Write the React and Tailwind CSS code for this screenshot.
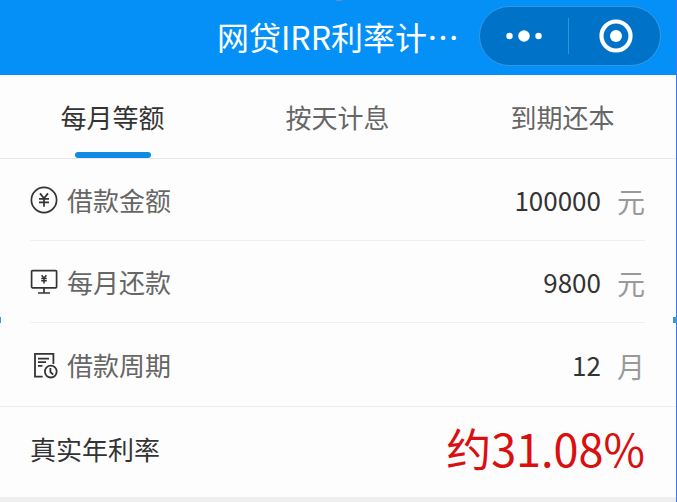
import { useState } from 'react';

const TABS = ['每月等额', '按天计息', '到期还本'];

const FIELDS = [
  { id: 'amount', label: '借款金额', value: '100000', unit: '元', Icon: YenIcon },
  { id: 'monthly', label: '每月还款', value: '9800', unit: '元', Icon: ScreenIcon },
  { id: 'period', label: '借款周期', value: '12', unit: '月', Icon: PeriodIcon },
];

function YenIcon() {
  return (
    <svg className="h-7 w-7 shrink-0" viewBox="0 0 28 28" fill="none" stroke="#333" strokeWidth="1.7" aria-hidden="true">
      <circle cx="14" cy="14" r="12.6" />
      <path d="M10 7.4l4 5 4-5M9 12.8h10M9 16.4h10M14 12.4v8.4" />
    </svg>
  );
}

function ScreenIcon() {
  return (
    <svg className="h-7 w-7 shrink-0" viewBox="0 0 28 28" fill="none" stroke="#333" strokeWidth="1.7" aria-hidden="true">
      <rect x="1.6" y="2.6" width="25" height="17.2" rx="1" />
      <path d="M14 20v4.8M8 25h12" />
      <path d="M11.6 7.2l2.4 2.8 2.4-2.8M11.2 10.4h5.6M11.2 12.8h5.6M14 10v5.4" strokeWidth="1.5" />
    </svg>
  );
}

function PeriodIcon() {
  return (
    <svg className="h-7 w-7 shrink-0" viewBox="0 0 28 28" fill="none" stroke="#333" strokeWidth="1.8" aria-hidden="true">
      <path d="M12.6 25.6H5V2.8h18.4V13" />
      <path d="M8 7.6h11M8 11.2h8M8 14.8h4.4" />
      <circle cx="20.8" cy="20.6" r="5.9" />
      <path d="M20.4 17v4l2.8 2.6" />
    </svg>
  );
}

function Capsule() {
  return (
    <div className="flex h-15 w-[182px] shrink-0 items-center rounded-full border border-[#2f9be6] bg-[#0073c8]">
      <button type="button" aria-label="更多" className="flex h-full flex-1 items-center justify-center">
        <svg className="h-3 w-9" viewBox="0 0 36 12" fill="#fff">
          <circle cx="3.5" cy="6" r="3.2" />
          <circle cx="18" cy="6" r="5.8" />
          <circle cx="32.5" cy="6" r="3.2" />
        </svg>
      </button>
      <span className="h-9 w-px bg-[#2c95dd]" />
      <button type="button" aria-label="关闭" className="flex h-full flex-1 items-center justify-center pl-1">
        <svg className="h-9 w-9" viewBox="0 0 36 36" fill="none">
          <circle cx="18" cy="18" r="14.5" stroke="#fff" strokeWidth="4.2" />
          <circle cx="18" cy="18" r="6" fill="#fff" />
        </svg>
      </button>
    </div>
  );
}

function Field({ id, label, value, unit, Icon, last }) {
  const [text, setText] = useState(value);
  return (
    <div className="pr-8 pl-[30px]">
      <div className={`flex items-center ${last ? 'h-[83px]' : 'h-[82px] border-b border-[#f0f0f0]'}`}>
        <Icon />
        <label htmlFor={id} className="ml-[9px] shrink-0 text-[26px] text-[#666]">{label}</label>
        <input
          id={id}
          inputMode="decimal"
          value={text}
          onChange={(e) => setText(e.target.value)}
          className="min-w-0 flex-1 bg-transparent text-right text-[26px] text-[#333] outline-none"
        />
        <span className="ml-4 pt-0.5 text-[28px] text-[#999]">{unit}</span>
      </div>
    </div>
  );
}

export default function App() {
  const [active, setActive] = useState(0);
  return (
    <div className="relative min-h-screen bg-[#eee] font-['Noto_Sans_CJK_SC',sans-serif]">
      <header className="flex h-[75px] items-center justify-end bg-[#0590f8] pr-4 pb-1">
        <h1 className="mr-5 whitespace-nowrap text-[32px] text-white">网贷IRR利率计…</h1>
        <Capsule />
      </header>

      <main className="bg-[#fdfdfd]">
        <nav className="flex h-21 border-b border-[#e8e8ea] pr-0.5" role="tablist">
          {TABS.map((tab, i) => (
            <button
              key={tab}
              type="button"
              role="tab"
              aria-selected={i === active}
              onClick={() => setActive(i)}
              className={`relative flex-1 text-[26px] ${i === active ? 'text-[#333]' : 'text-[#666]'}`}
            >
              {tab}
              {i === active && (
                <span className="absolute bottom-0 left-1/2 h-1.5 w-19 -translate-x-1/2 rounded-full bg-[#118ae2]" />
              )}
            </button>
          ))}
        </nav>

        {FIELDS.map((f, i) => (
          <Field key={f.id} {...f} last={i === FIELDS.length - 1} />
        ))}

        <section className="flex h-[91px] items-center justify-between border-t border-[#ececec] pr-8 pb-2 pl-[30px]">
          <span className="text-[26px] text-[#333]">真实年利率</span>
          <output className="text-[45px] text-[#d9100f]">约31.08%</output>
        </section>
      </main>

      {/* selection frame: right edge and grab handles */}
      <span className="absolute inset-y-0 right-0 w-px bg-[#3b78f0]" />
      <span className="absolute top-0 left-1/2 h-px w-1.5 -translate-x-1/2 bg-[#5d93bd]" />
      <span className="absolute top-[317px] left-0 h-1.5 w-px bg-[#3a9ad9]" />
      <span className="absolute top-[317px] right-0 h-1.5 w-1 bg-[#3a9ad9]" />
    </div>
  );
}
